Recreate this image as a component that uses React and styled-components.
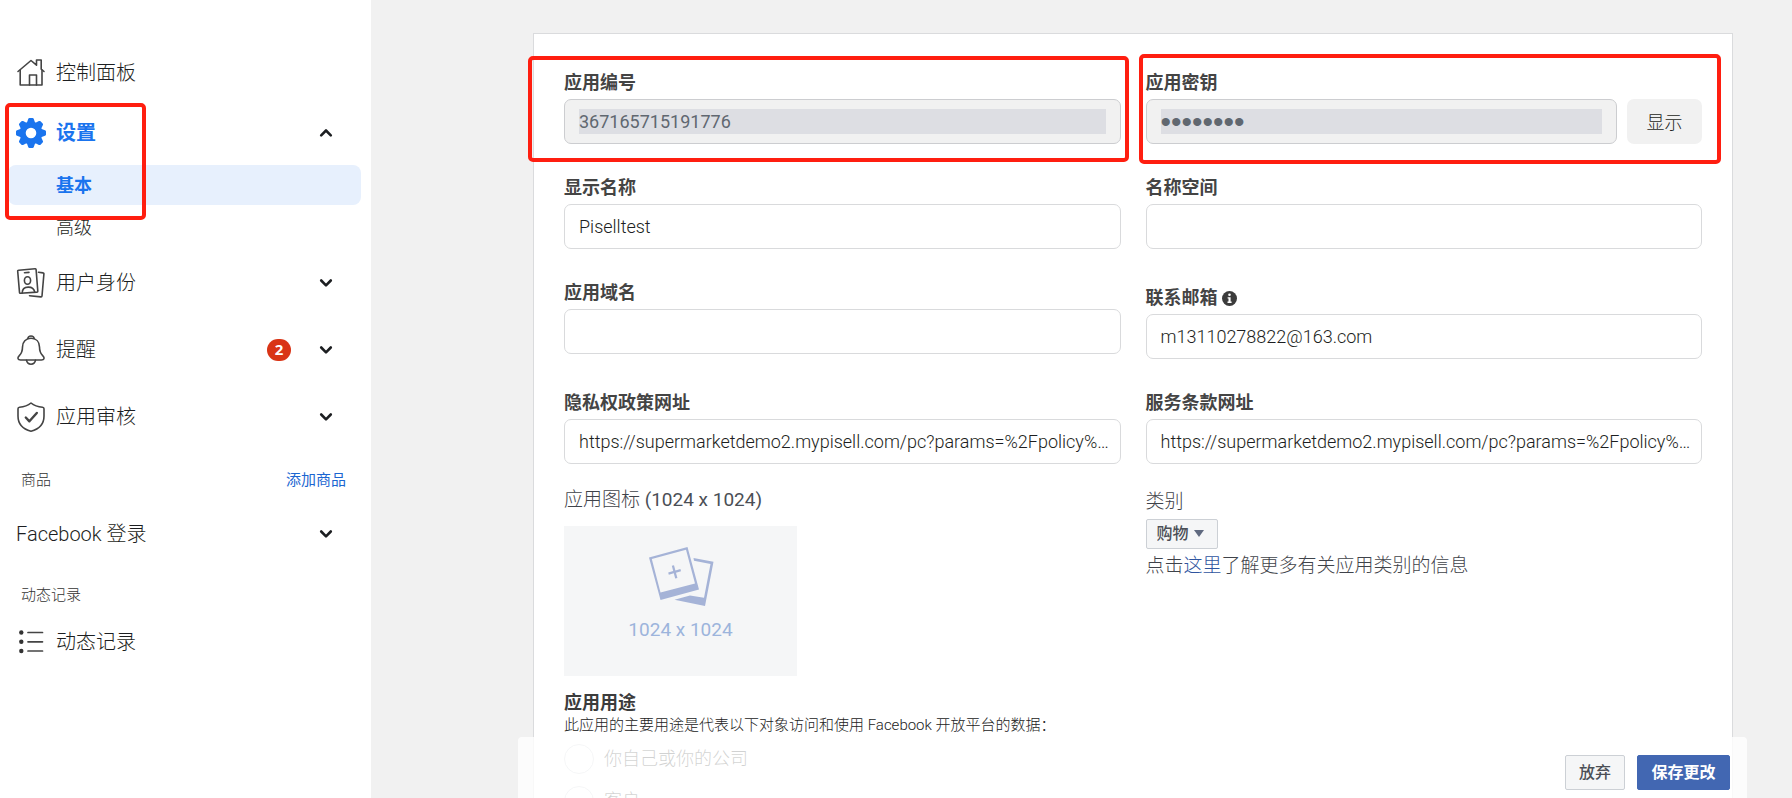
import React from 'react';
import styled, { createGlobalStyle } from 'styled-components';

const Global = createGlobalStyle`
  * { box-sizing: border-box; }
  body {
    margin: 0;
    background: #f1f1f1;
    color: #1c1e21;
    font-family: Roboto, "Noto Sans CJK SC", sans-serif;
  }
  button, input, select { font-family: inherit; }
  a { text-decoration: none; }
`;

const Page = styled.div`
  display: flex;
  height: 100vh;
`;

const Latin = styled.span`
  color: #4b4f56;
  font-weight: 400;
`;

/* ---------- Sidebar ---------- */

const Sidebar = styled.nav`
  flex: 0 0 371px;
  padding-top: 43px;
  background: #fff;
  overflow: hidden;
`;

const NavRow = styled.a`
  display: flex;
  align-items: center;
  gap: 10px;
  height: ${(p) => p.$height}px;
  padding: 0 35px 0 16px;
  font-size: 20px;
  font-weight: ${(p) => (p.$active ? 700 : 300)};
  color: ${(p) => (p.$active ? '#1a74ee' : '#1c1e21')};
`;

const NavText = styled.span`
  flex: 1;
  line-height: 28px;
`;

const Badge = styled.span`
  width: 24px;
  height: 22px;
  margin-right: 15px;
  border-radius: 11px;
  background: #d93416;
  color: #fff;
  font-family: "Open Sans", sans-serif;
  font-size: 15px;
  font-weight: 700;
  line-height: 21px;
  text-align: center;
`;

const Group = styled.div`
  position: relative;
`;

const SubList = styled.div`
  display: grid;
  gap: 2px;
  padding: 2px 10px 2px 8px;
`;

const SubItem = styled.a`
  padding: 1px 0 0 48px;
  border-radius: 8px;
  background: ${(p) => (p.$active ? '#e7f0fd' : 'transparent')};
  color: ${(p) => (p.$active ? '#1a74ee' : '#1c1e21')};
  font-size: 18px;
  font-weight: ${(p) => (p.$active ? 700 : 300)};
  line-height: 39px;
`;

const Section = styled.div`
  display: flex;
  justify-content: space-between;
  margin-top: ${(p) => p.$top}px;
  padding: 0 25px 0 21px;
  color: #333;
  font-size: 15px;
  font-weight: 300;
  line-height: 50px;
`;

const AddLink = styled.a`
  color: #1b66d1;
  font-weight: 400;
`;

/* ---------- Main ---------- */

const Main = styled.main`
  flex: 1;
  min-width: 0;
  padding: 33px 59px 0 162px;
  overflow-y: auto;
  scrollbar-width: none;
`;

const Card = styled.form`
  padding: 36px 30px 80px;
  border: 1px solid #dadbdd;
  background: #fff;
`;

const Columns = styled.div`
  display: grid;
  grid-template-columns: 1fr 1fr;
  gap: 31px 25px;
  margin-top: ${(p) => p.$top || 0}px;
`;

const FieldBox = styled.div`
  position: relative;
  padding-top: ${(p) => p.$top || 0}px;
`;

const Label = styled.label`
  display: flex;
  align-items: center;
  gap: 4px;
  margin-bottom: 3px;
  color: #444;
  font-size: 18px;
  font-weight: 700;
  line-height: 26px;
`;

const InputLine = styled.div`
  display: flex;
  gap: 10px;
`;

const TextInput = styled.input`
  flex: 1;
  min-width: 0;
  height: 45px;
  padding: ${(p) => (p.readOnly ? '9px 14px' : '9px 10px 9px 14px')};
  border: 1px solid ${(p) => (p.readOnly ? '#cccdd0' : '#d9dadc')};
  border-radius: 7px;
  background: ${(p) =>
    p.readOnly
      ? 'linear-gradient(#dddee3, #dddee3) content-box, #f1f1f1'
      : '#fff'};
  color: ${(p) => (p.readOnly ? '#606770' : '#1c1e21')};
  font-size: 18px;
  font-weight: ${(p) => (p.readOnly ? 400 : 300)};
  outline: 0;

  &[type='password'] {
    font-family: "Liberation Sans", sans-serif;
    font-size: 30px;
  }
`;

const ShowButton = styled.button`
  width: 75px;
  padding: 0 0 2px;
  border: 0;
  border-radius: 7px;
  background: #f1f1f1;
  color: #1c1e21;
  font-size: 18px;
  font-weight: 300;
`;

const Highlight = styled.div`
  position: absolute;
  z-index: 2;
  inset: ${(p) => p.$inset};
  border: 4px solid #ff1e10;
  border-radius: 5px;
  pointer-events: none;
`;

const Caption = styled.div`
  color: #3f434a;
  font-size: 19px;
  font-weight: 300;
  line-height: 26px;
`;

const Upload = styled.button`
  display: flex;
  flex-direction: column;
  align-items: center;
  width: 233px;
  height: 150px;
  margin-top: 13px;
  padding: 20px 0 0;
  border: 0;
  background: #f5f6f7;
  color: #9cb4dc;
  font-size: 19px;
  line-height: 24px;
`;

const UploadText = styled.span`
  margin-top: 10px;
`;

const Category = styled.div`
  display: flex;
  flex-direction: column;
  align-items: flex-start;
  gap: 4px;
  padding-top: 2px;
`;

const SelectWrap = styled.div`
  position: relative;
  width: 72px;

  &::after {
    content: '';
    position: absolute;
    top: 11px;
    right: 14px;
    border: 5px solid transparent;
    border-top: 7px solid #606a80;
    border-bottom: 0;
    pointer-events: none;
  }
`;

const Select = styled.select`
  display: block;
  width: 100%;
  height: 30px;
  padding: 0 0 2px 10px;
  border: 1px solid #ccd0d5;
  border-radius: 2px;
  background: #f5f6f7;
  color: #4b4f56;
  font-size: 16px;
  font-weight: 500;
  appearance: none;
`;

const TextLink = styled.a`
  color: #2f559f;
`;

const Purpose = styled.fieldset`
  margin: 14px 0 0;
  padding: 0;
  border: 0;
`;

const Legend = styled.legend`
  padding: 0;
  color: #3c3c3c;
  font-size: 18px;
  font-weight: 700;
  line-height: 26px;
`;

const Hint = styled.p`
  margin: 0 0 10px;
  color: #222;
  font-size: 15px;
  font-weight: 300;
  line-height: 18px;
`;

const RadioRow = styled.label`
  display: flex;
  align-items: center;
  gap: 10px;
  margin-bottom: 12px;
  font-size: 18px;
  font-weight: 300;
  line-height: 30px;
`;

const Radio = styled.input`
  width: 30px;
  height: 30px;
  margin: 0;
  border: 1px solid #ccd0d5;
  border-radius: 50%;
  background: #fff;
  appearance: none;
`;

const Footer = styled.footer`
  position: sticky;
  z-index: 1;
  bottom: 0;
  display: flex;
  justify-content: flex-end;
  gap: 12px;
  margin: -61px -14px 0 -15px;
  padding: 18px 17px 8px;
  border-radius: 4px 4px 0 0;
  background: rgba(255, 255, 255, 0.8);
`;

const ActionButton = styled.button`
  min-width: ${(p) => (p.$primary ? 93 : 60)}px;
  height: 35px;
  padding: 0 13px 3px;
  border: 1px solid ${(p) => (p.$primary ? '#4267b2' : '#ccd0d5')};
  border-radius: 2px;
  background: ${(p) => (p.$primary ? '#4267b2' : '#f5f6f7')};
  color: ${(p) => (p.$primary ? '#fff' : '#4b4f56')};
  font-size: 16px;
  font-weight: ${(p) => (p.$primary ? 700 : 500)};
`;

/* ---------- Icons ---------- */

const NavSvg = ({ children }) => (
  <svg
    width="30"
    height="30"
    viewBox="0 0 30 30"
    fill="none"
    stroke="#444"
    strokeWidth="1.6"
    strokeLinejoin="round"
    strokeLinecap="round"
    aria-hidden="true"
  >
    {children}
  </svg>
);

const HomeIcon = () => (
  <NavSvg>
    <path d="M2 13.500 15 2.500l5.500 4.700V2h4.700v9.200L28 13.500" />
    <path d="M4.200 12.200V27H26V12.200" />
    <path d="M13.500 27V17h7v10" />
  </NavSvg>
);

const GearIcon = () => (
  <svg width="30" height="30" viewBox="-15 -15 30 30" fill="#1a74ee" aria-hidden="true">
    <path
      fillRule="evenodd"
      d="M0-11.300A11.300 11.300 0 1 1 0 11.300 11.300 11.300 0 1 1 0-11.300ZM0-5.300A5.300 5.300 0 1 0 0 5.300 5.300 5.300 0 1 0 0-5.300Z"
    />
    {[0, 45, 90, 135, 180, 225, 270, 315].map((a) => (
      <path
        key={a}
        transform={`rotate(${a})`}
        d="M-4.200-10 -2.800-14Q-2.500-15-1.500-15H1.500Q2.500-15 2.800-14L4.200-10Z"
      />
    ))}
  </svg>
);

const RolesIcon = () => (
  <NavSvg>
    <path d="M2.700 2.200 19 .8q1-.1 1.100.9L21.800 23q.1 1-.9 1.100L4.600 25.300q-1 .1-1.100-.9L1.700 3.300q-.1-1 1-1.100Z" />
    <path d="M8.500 4.800 13 4.400" />
    <ellipse cx="11.500" cy="12.500" rx="3.100" ry="3.800" />
    <path d="M6.200 25q0-5.800 6-5.900 5.500-.1 6.600 5" />
    <path d="M22.500 4.300 27 4.900q1 .1.900 1.100L26 28q-.1 1-1.100.9L13.500 27.700" />
  </NavSvg>
);

const BellIcon = () => (
  <NavSvg>
    <path d="M15 3.300c-5.200 0-8.500 3.500-8.500 8.700 0 4.500-1 6.500-3.200 8.600C.8 23 2 25 4.500 25h21c2.500 0 3.700-2 1.200-4.400-2.200-2.100-3.200-4.100-3.200-8.600 0-5.200-3.300-8.700-8.500-8.700Z" />
    <path d="M11.800 3.800Q12 1 15 1t3.200 2.800" />
    <path d="M10.500 25.200c.4 2.500 2.200 4 4.500 4s4.100-1.500 4.500-4" />
  </NavSvg>
);

const ShieldIcon = () => (
  <NavSvg>
    <path d="M15 1c3.200 2.700 7 3.900 11.500 4.200 1 .1 1.500.7 1.500 1.600V14c0 7.500-4.500 13-13 15.200C6.500 27 2 21.500 2 14V6.800c0-.9.500-1.500 1.500-1.600C8 4.900 11.800 3.700 15 1Z" />
    <path d="m9.800 15.500 3.600 3.800 7.400-8.300" strokeWidth="2.400" />
  </NavSvg>
);

const ListIcon = () => (
  <NavSvg>
    {[5.500, 14.800, 24].map((y) => (
      <g key={y}>
        <circle cx="5.300" cy={y} r="2.200" fill="#333" stroke="none" />
        <path d={`M12 ${y}H26.500`} strokeWidth="1.700" />
      </g>
    ))}
  </NavSvg>
);

const Chevron = ({ up }) => (
  <svg
    width="20"
    height="20"
    viewBox="0 0 20 20"
    fill="none"
    stroke="#1c1e21"
    strokeWidth="2.600"
    strokeLinecap="round"
    strokeLinejoin="round"
    aria-hidden="true"
  >
    <path d={up ? 'm5.200 12.300 4.800-4.800 4.800 4.800' : 'm5.200 7.500 4.800 4.800 4.800-4.800'} />
  </svg>
);

const InfoIcon = () => (
  <svg width="15" height="15" viewBox="0 0 15 15" aria-hidden="true">
    <circle cx="7.500" cy="7.500" r="7.500" fill="#3c3c3c" />
    <circle cx="7.500" cy="3.800" r="1.300" fill="#fff" />
    <path d="M5.600 6.200h3v4.400h1v1.400H5.500v-1.400h1V7.600h-.9Z" fill="#fff" />
  </svg>
);

const PhotosIcon = () => (
  <svg width="66" height="62" viewBox="0 0 66 62" fill="#a5b3d7" aria-hidden="true">
    <path
      fillRule="evenodd"
      d="M1 11.500 39.500 1 51 43.500 12.500 54ZM3.800 13 12.500 46.500 47 37.500 38 3.800Z"
    />
    <path d="m23.800 19.800 2.200-.6 1.400 5.300 5-1.400.6 2.200-5 1.400 1.400 5.300-2.200.6-1.400-5.300-5 1.400-.6-2.200 5-1.400Z" />
    <path d="M45.500 12 65.500 15.800 57 60 26.500 53.800 42 49.500l14 2.300L62.500 18 46 14.800Z" />
  </svg>
);

/* ---------- Pieces ---------- */

const NavItem = ({ icon, label, height, active, open, badge, expandable }) => (
  <NavRow href="#" $height={height} $active={active}>
    {icon}
    <NavText>{label}</NavText>
    {badge && <Badge>{badge}</Badge>}
    {expandable && <Chevron up={open} />}
  </NavRow>
);

const Field = ({ id, label, info, value = '', type = 'text', readOnly, top, highlight, action }) => (
  <FieldBox $top={top}>
    <Label htmlFor={id}>
      {label}
      {info && <InfoIcon />}
    </Label>
    <InputLine>
      <TextInput id={id} type={type} defaultValue={value} readOnly={readOnly} />
      {action && <ShowButton type="button">{action}</ShowButton>}
    </InputLine>
    {highlight && <Highlight $inset={highlight} />}
  </FieldBox>
);

const policyUrl = 'https://supermarketdemo2.mypisell.com/pc?params=%2Fpolicy%…';

export default function App() {
  return (
    <Page>
      <Global />
      <Sidebar>
        <NavItem icon={<HomeIcon />} label="控制面板" height={60} />
        <Group>
          <NavItem icon={<GearIcon />} label="设置" height={60} active open expandable />
          <SubList>
            <SubItem href="#" $active>基本</SubItem>
            <SubItem href="#">高级</SubItem>
          </SubList>
          <Highlight $inset="0 225px 29px 5px" />
        </Group>
        <NavItem icon={<RolesIcon />} label="用户身份" height={67} expandable />
        <NavItem icon={<BellIcon />} label="提醒" height={67} badge="2" expandable />
        <NavItem icon={<ShieldIcon />} label="应用审核" height={68} expandable />
        <Section $top={4}>
          <span>商品</span>
          <AddLink href="#">添加商品</AddLink>
        </Section>
        <NavItem label="Facebook 登录" height={57} expandable />
        <Section $top={8}>
          <span>动态记录</span>
        </Section>
        <NavItem icon={<ListIcon />} label="动态记录" height={43} />
      </Sidebar>

      <Main>
        <Card>
          <Columns>
            <Field id="app-id" label="应用编号" value="367165715191776" readOnly highlight="-14px -8px -18px -36px" />
            <Field
              id="app-secret"
              label="应用密钥"
              type="password"
              value="12345678"
              readOnly
              action="显示"
              highlight="-16px -19px -20px -7px"
            />
            <Field id="display-name" label="显示名称" value="Piselltest" />
            <Field id="namespace" label="名称空间" />
            <Field id="domains" label="应用域名" />
            <Field id="email" label="联系邮箱" info value="m13110278822@163.com" top={5} />
            <Field id="privacy-url" label="隐私权政策网址" value={policyUrl} />
            <Field id="terms-url" label="服务条款网址" value={policyUrl} />
          </Columns>

          <Columns $top={23}>
            <div>
              <Caption>
                应用图标 <Latin>(1024 x 1024)</Latin>
              </Caption>
              <Upload type="button">
                <PhotosIcon />
                <UploadText>1024 x 1024</UploadText>
              </Upload>
            </div>
            <Category>
              <Caption as="label" htmlFor="category">
                类别
              </Caption>
              <SelectWrap>
                <Select id="category" defaultValue="shopping">
                  <option value="shopping">购物</option>
                </Select>
              </SelectWrap>
              <Caption>
                点击<TextLink href="#">这里</TextLink>了解更多有关应用类别的信息
              </Caption>
            </Category>
          </Columns>

          <Purpose>
            <Legend>应用用途</Legend>
            <Hint>此应用的主要用途是代表以下对象访问和使用 Facebook 开放平台的数据：</Hint>
            <RadioRow>
              <Radio type="radio" name="purpose" />
              你自己或你的公司
            </RadioRow>
            <RadioRow>
              <Radio type="radio" name="purpose" />
              客户
            </RadioRow>
          </Purpose>
        </Card>
        <Footer>
          <ActionButton type="button">放弃</ActionButton>
          <ActionButton type="button" $primary>
            保存更改
          </ActionButton>
        </Footer>
      </Main>
    </Page>
  );
}
